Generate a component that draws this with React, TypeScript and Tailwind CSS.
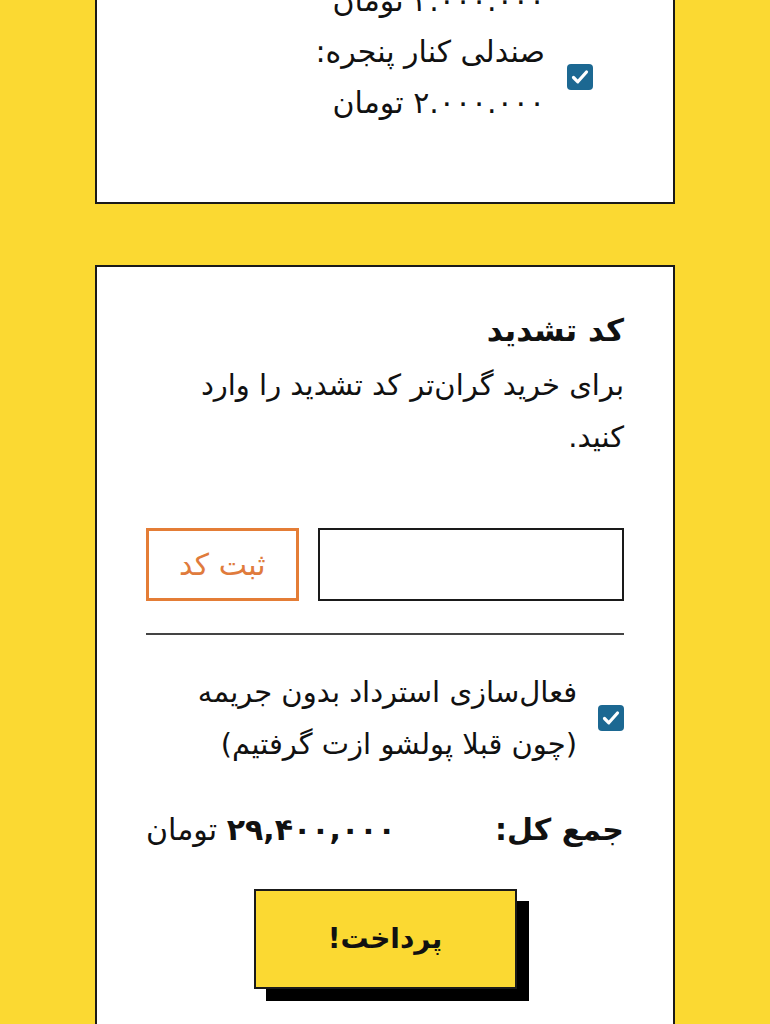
import React from 'react'

const fa = { fontFamily: '"DejaVu Sans", "Noto Sans", sans-serif' }

function CheckBox() {
    return (
        <span className="flex h-[26px] w-[26px] shrink-0 items-center justify-center rounded-[4px] bg-[#1c6892]">
            <svg viewBox="0 0 24 24" className="h-[24px] w-[24px]" fill="none" stroke="#fff" strokeWidth={3.2} strokeLinecap="round" strokeLinejoin="round">
                <path d="M5.5 12.5l4.3 4.3L18.5 7" />
            </svg>
        </span>
    )
}

function SeatOption({ label, price }: { label: string; price: string }) {
    return (
        <label className="flex items-center gap-[22px]">
            <CheckBox />
            <span className="text-[30px] leading-[51px] text-[#111]">
                <span className="block">{label}</span>
                <span className="block">{price} تومان</span>
            </span>
        </label>
    )
}

export default function App() {
    return (
        <main dir="rtl" style={fa} className="h-screen overflow-hidden bg-[#fbd932]">
            <div className="-mt-[140px] flex flex-col gap-[61px] pb-16">
                {/* options card, scrolled partly out of view */}
                <section className="mx-auto w-[580px] border-2 border-[#1a1a1a] bg-white pb-[74px] pr-[80px] pt-[62px]">
                    <div className="flex flex-col">
                        <SeatOption label="صندلی ردیف جلو:" price="۲.۰۰۰.۰۰۰" />
                        <SeatOption label="صندلی کنار پنجره:" price="۲.۰۰۰.۰۰۰" />
                    </div>
                </section>

                {/* booster code + checkout */}
                <section className="mx-auto w-[580px] border-2 border-[#1a1a1a] bg-white px-[49px] pb-[60px] pt-[43px] text-[#111]">
                    <h2 className="text-[31px] font-bold leading-[40px]">کد تشدید</h2>
                    <p className="mt-[9px] max-w-[450px] text-[29px] leading-[52px]">
                        برای خرید گران‌تر کد تشدید را وارد کنید.
                    </p>

                    <div className="mt-[65px] flex gap-[19px]">
                        <input
                            type="text"
                            className="h-[73px] w-[307px] border-2 border-[#1a1a1a] bg-white px-3 text-[22px] outline-none"
                        />
                        <button className="h-[73px] w-[153px] border-[3px] border-[#e47d36] text-[30px] text-[#e07b3c]">
                            ثبت کد
                        </button>
                    </div>

                    <hr className="mt-[32px] border-t-2 border-[#444]" />

                    <label className="mt-[31px] flex items-center gap-[21px]">
                        <CheckBox />
                        <span className="text-[29px] leading-[52px]">
                            فعال‌سازی استرداد بدون جریمه
                            <br />
                            (چون قبلا پولشو ازت گرفتیم)
                        </span>
                    </label>

                    <div className="mt-[34px] flex items-center justify-between leading-[52px]">
                        <span className="text-[30px] font-bold">جمع کل:</span>
                        <span className="text-[30px]">
                            <span className="font-bold">۲۹,۴۰۰,۰۰۰</span> تومان
                        </span>
                    </div>

                    <div className="mt-[33px] flex justify-center">
                        <button className="h-[100px] w-[263px] border-2 border-[#1a1a1a] bg-[#fbd932] text-[28px] font-bold shadow-[12px_12px_0_0_#000]">
                            پرداخت!
                        </button>
                    </div>
                </section>
            </div>
        </main>
    )
}
